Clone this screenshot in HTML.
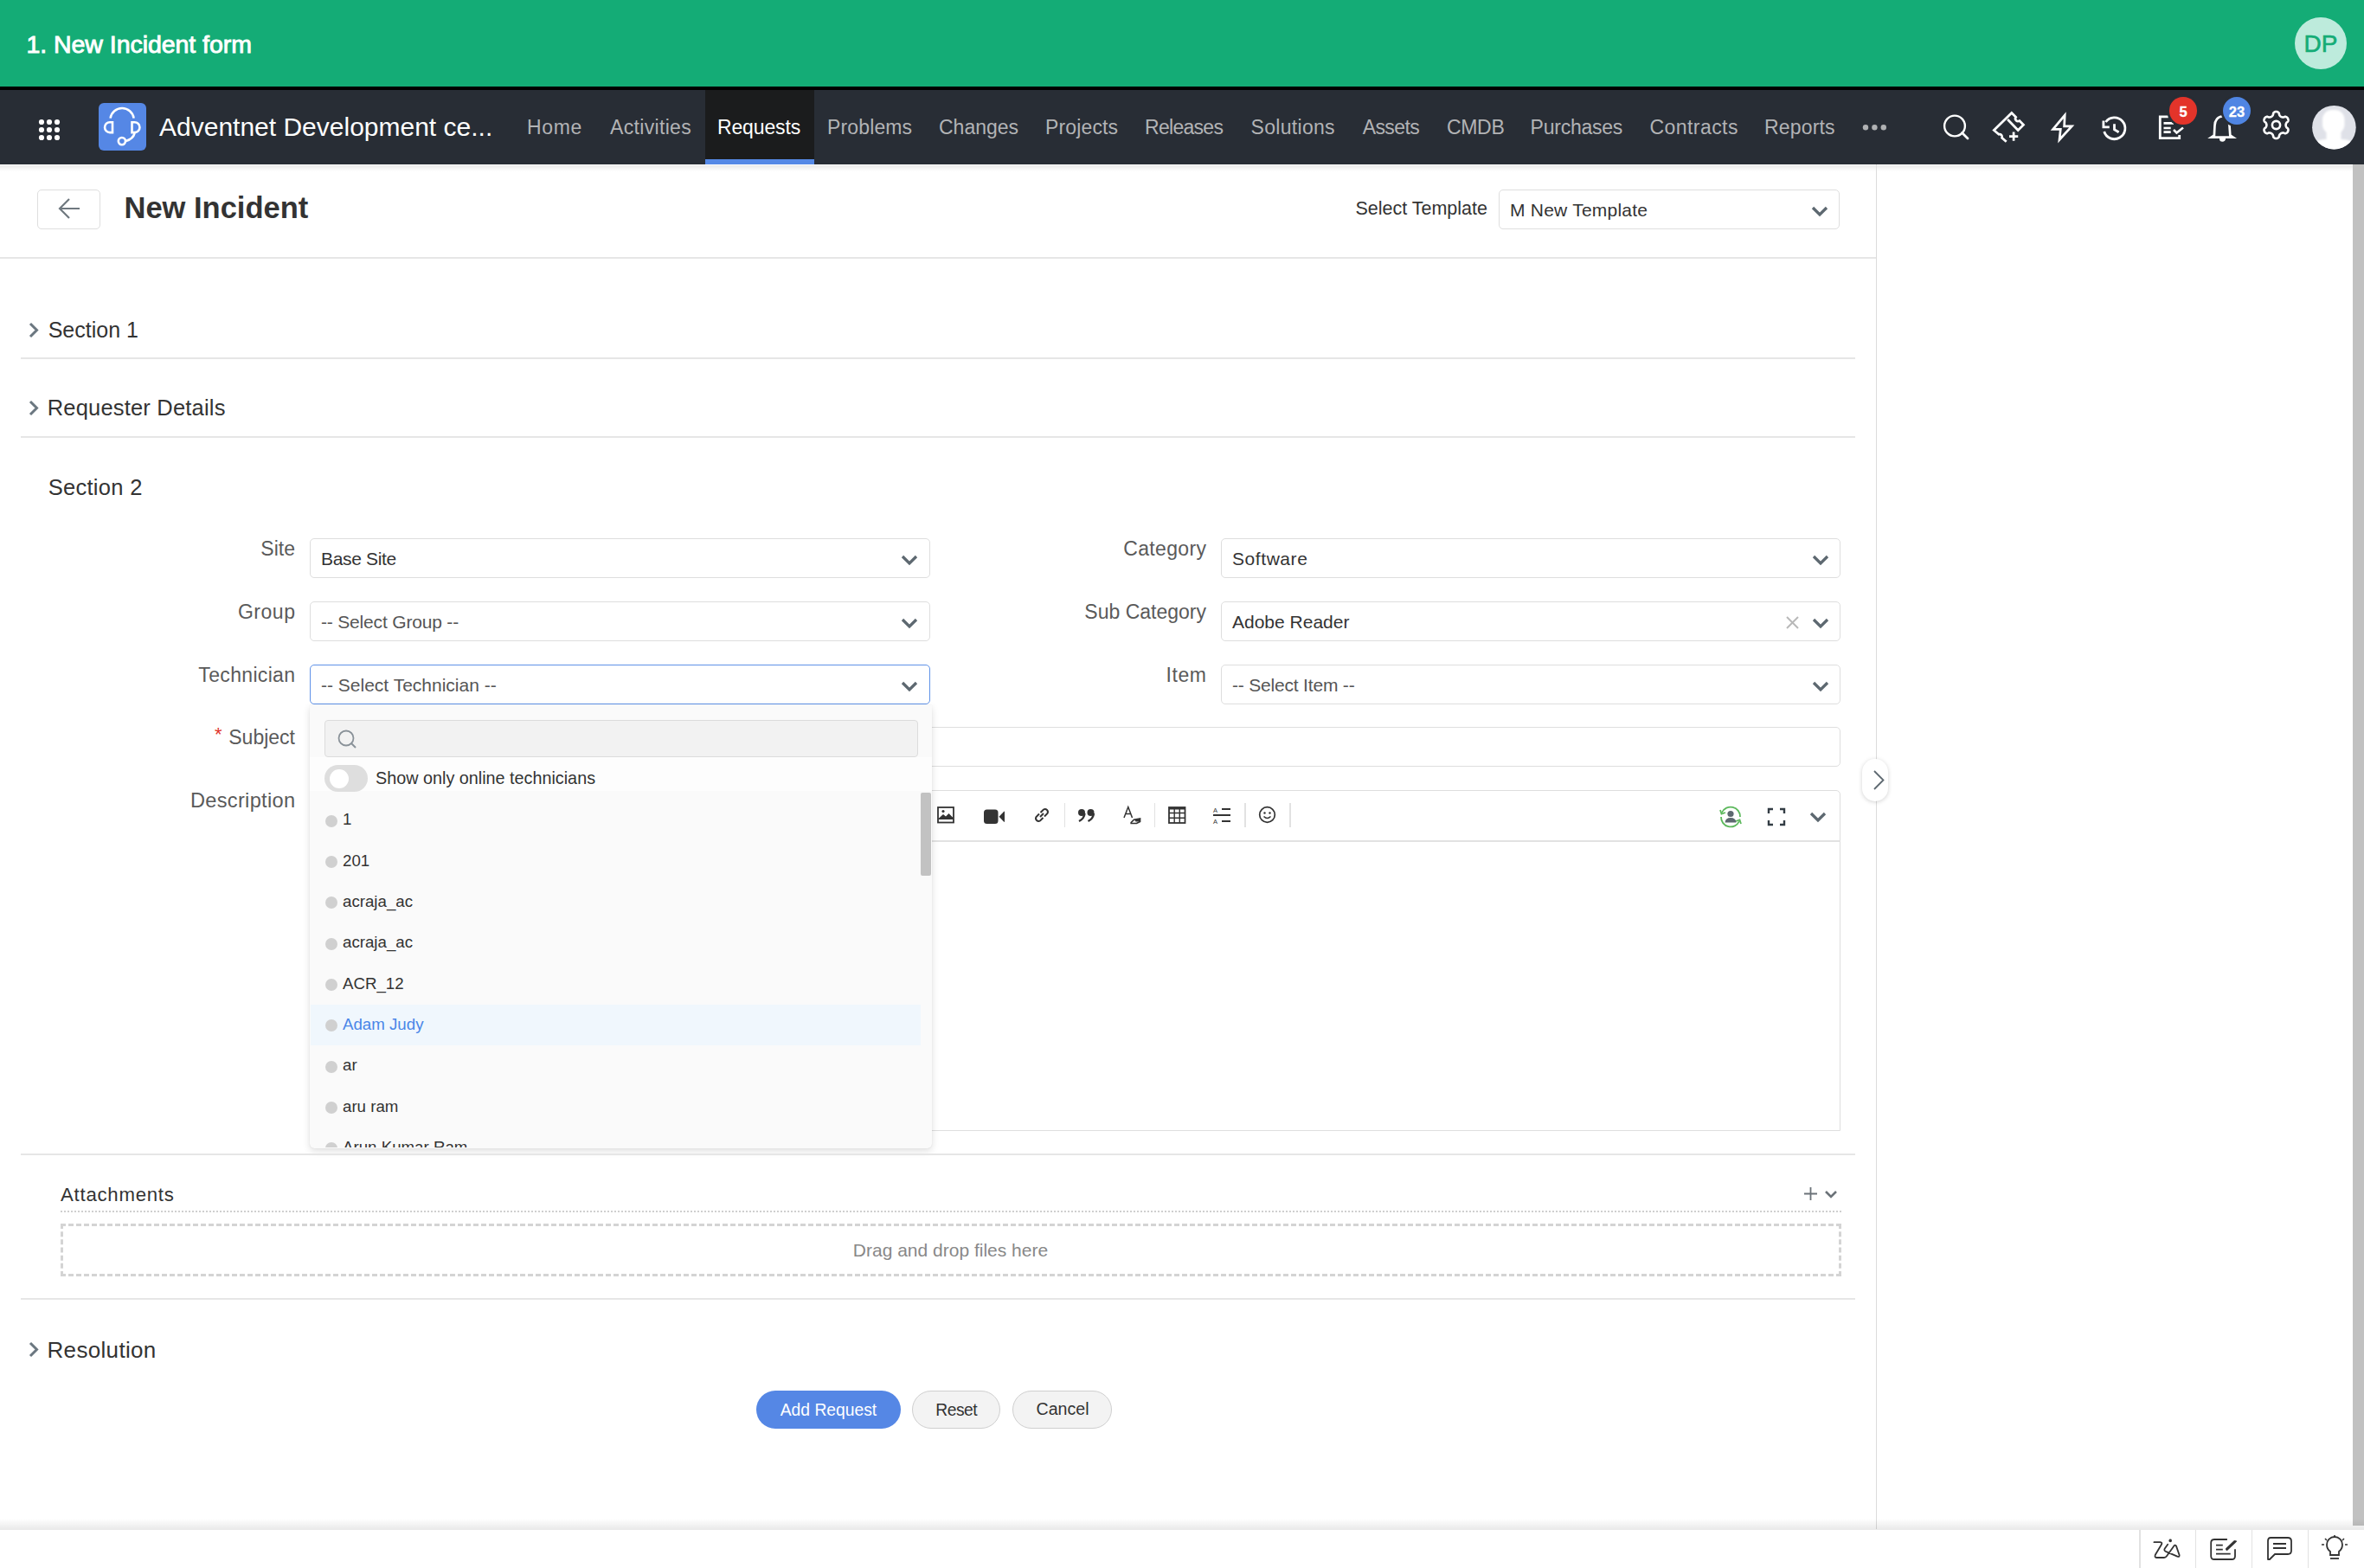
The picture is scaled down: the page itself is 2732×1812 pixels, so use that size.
<!DOCTYPE html>
<html><head><meta charset="utf-8"><title>New Incident</title>
<style>
html,body{margin:0;padding:0;}
body{width:2732px;height:1812px;position:relative;overflow:hidden;background:#fff;font-family:"Liberation Sans", sans-serif;}
svg{overflow:visible}
</style></head><body>
<div style="position:absolute;left:0px;top:0px;width:2732px;height:100px;background:#14ac76"></div>
<div style="position:absolute;left:30.5px;top:37.47px;font-size:28.5px;line-height:28.5px;color:#fff;font-weight:400;white-space:nowrap;letter-spacing:-0.05px;-webkit-text-stroke:0.9px #fff">1. New Incident form</div>
<div style="position:absolute;left:2652px;top:20px;width:60px;height:60px;background:#bdebdc;border-radius:50%"></div>
<div style="position:absolute;left:2182.00px;width:1000px;text-align:center;top:37.10px;font-size:28px;line-height:28px;color:#14ac76;font-weight:400;white-space:nowrap;-webkit-text-stroke:0.6px #14ac76">DP</div>
<div style="position:absolute;left:0px;top:100px;width:2732px;height:4px;background:#000"></div>
<div style="position:absolute;left:0px;top:104px;width:2732px;height:86px;background:#282d35"></div>
<svg style="position:absolute;left:45px;top:138px;" width="24" height="24" viewBox="0 0 24 24"><circle cx="3" cy="3" r="3.1" fill="#fff"/><circle cx="3" cy="12" r="3.1" fill="#fff"/><circle cx="3" cy="21" r="3.1" fill="#fff"/><circle cx="12" cy="3" r="3.1" fill="#fff"/><circle cx="12" cy="12" r="3.1" fill="#fff"/><circle cx="12" cy="21" r="3.1" fill="#fff"/><circle cx="21" cy="3" r="3.1" fill="#fff"/><circle cx="21" cy="12" r="3.1" fill="#fff"/><circle cx="21" cy="21" r="3.1" fill="#fff"/></svg>
<div style="position:absolute;left:114px;top:119px;width:55px;height:55px;background:#5587e5;border-radius:6px"></div>
<svg style="position:absolute;left:114px;top:119px;" width="55" height="55" viewBox="0 0 55 55"><path d="M13.6 17.6 A13.66 13.66 0 0 1 40.6 17.6" fill="none" stroke="#fff" stroke-width="2.6"/><path d="M16 22.2 L16 34.1 L13 34.1 A5.95 5.95 0 0 1 13 22.2 Z" fill="none" stroke="#fff" stroke-width="2.6"/><path d="M38.5 22.2 L38.5 34.1 L41.5 34.1 A5.95 5.95 0 0 0 41.5 22.2 Z" fill="none" stroke="#fff" stroke-width="2.6"/><path d="M41.6 34.8 Q39.8 41.5 31.5 43.9" fill="none" stroke="#fff" stroke-width="2.6"/><circle cx="26.9" cy="44.1" r="4.1" fill="none" stroke="#fff" stroke-width="2.6"/></svg>
<div style="position:absolute;left:184px;top:131.60px;font-size:30px;line-height:30px;color:#fff;font-weight:400;white-space:nowrap;">Adventnet Development ce...</div>
<div style="position:absolute;left:815px;top:104px;width:126px;height:86px;background:#1b1c1d"></div>
<div style="position:absolute;left:815px;top:184px;width:126px;height:6px;background:#5589e6"></div>
<div style="position:absolute;left:609px;top:136.23px;font-size:23px;line-height:23px;color:#b2b3b5;font-weight:400;white-space:nowrap;letter-spacing:0.67px;">Home</div>
<div style="position:absolute;left:705px;top:136.23px;font-size:23px;line-height:23px;color:#b2b3b5;font-weight:400;white-space:nowrap;letter-spacing:0.33px;">Activities</div>
<div style="position:absolute;left:829px;top:136.23px;font-size:23px;line-height:23px;color:#fff;font-weight:400;white-space:nowrap;letter-spacing:-0.14px;">Requests</div>
<div style="position:absolute;left:956px;top:136.23px;font-size:23px;line-height:23px;color:#b2b3b5;font-weight:400;white-space:nowrap;letter-spacing:0.14px;">Problems</div>
<div style="position:absolute;left:1085px;top:136.23px;font-size:23px;line-height:23px;color:#b2b3b5;font-weight:400;white-space:nowrap;">Changes</div>
<div style="position:absolute;left:1208px;top:136.23px;font-size:23px;line-height:23px;color:#b2b3b5;font-weight:400;white-space:nowrap;letter-spacing:0.14px;">Projects</div>
<div style="position:absolute;left:1323px;top:136.23px;font-size:23px;line-height:23px;color:#b2b3b5;font-weight:400;white-space:nowrap;letter-spacing:-0.71px;">Releases</div>
<div style="position:absolute;left:1445.5px;top:136.23px;font-size:23px;line-height:23px;color:#b2b3b5;font-weight:400;white-space:nowrap;letter-spacing:0.31px;">Solutions</div>
<div style="position:absolute;left:1574.7px;top:136.23px;font-size:23px;line-height:23px;color:#b2b3b5;font-weight:400;white-space:nowrap;letter-spacing:-0.6px;">Assets</div>
<div style="position:absolute;left:1672px;top:136.23px;font-size:23px;line-height:23px;color:#b2b3b5;font-weight:400;white-space:nowrap;letter-spacing:-0.33px;">CMDB</div>
<div style="position:absolute;left:1768.6px;top:136.23px;font-size:23px;line-height:23px;color:#b2b3b5;font-weight:400;white-space:nowrap;letter-spacing:-0.25px;">Purchases</div>
<div style="position:absolute;left:1906.6px;top:136.23px;font-size:23px;line-height:23px;color:#b2b3b5;font-weight:400;white-space:nowrap;letter-spacing:0.42px;">Contracts</div>
<div style="position:absolute;left:2039px;top:136.23px;font-size:23px;line-height:23px;color:#b2b3b5;font-weight:400;white-space:nowrap;letter-spacing:0.17px;">Reports</div>
<svg style="position:absolute;left:2152px;top:144px;" width="29" height="7" viewBox="0 0 29 7"><circle cx="4" cy="3.2" r="3.2" fill="#b0b1b3"/><circle cx="14.4" cy="3.2" r="3.2" fill="#b0b1b3"/><circle cx="24.8" cy="3.2" r="3.2" fill="#b0b1b3"/></svg>
<svg style="position:absolute;left:2240px;top:126px;" width="40" height="40" viewBox="0 0 40 40"><circle cx="19" cy="19.5" r="11.9" fill="none" stroke="#fff" stroke-width="2.4"/><path d="M27.5 27.5 L34 34" stroke="#fff" stroke-width="2.8" stroke-linecap="round"/></svg>
<svg style="position:absolute;left:2295px;top:120px;" width="50" height="50" viewBox="0 0 50 50"><path d="M23.7 43.7 L18.6 39.3 A3 3 0 0 0 15 35.3 L9.3 30.5 L29.8 10.5 L34.7 15.3 A3 3 0 0 0 38.9 19.5 L43.5 24.2 L37.2 30.5 L25.1 18" fill="none" stroke="#fff" stroke-width="2.7" stroke-linejoin="miter"/><path d="M32.1 32.6 L32.1 42.8 M27 37.7 L37.2 37.7" stroke="#fff" stroke-width="2.7"/></svg>
<svg style="position:absolute;left:2360px;top:120px;" width="45" height="50" viewBox="0 0 45 50"><path d="M26.2 13.2 L12.6 29.3 L21.3 29.3 L20 41.5 L34.3 25.9 L25.6 25.9 Z" fill="none" stroke="#fff" stroke-width="2.7" stroke-linejoin="miter"/></svg>
<svg style="position:absolute;left:2420px;top:116.5px;" width="50" height="50" viewBox="0 0 50 50"><path d="M11.7 35 A12.4 12.4 0 1 0 13.5 24" fill="none" stroke="#fff" stroke-width="2.8"/><path d="M10.9 22.5 L10.9 29.8 L17.8 29.8" fill="none" stroke="#fff" stroke-width="2.8"/><path d="M23.5 26.3 L23.5 32.6 L28.6 35.7" fill="none" stroke="#fff" stroke-width="2.8"/></svg>
<svg style="position:absolute;left:2420px;top:115px;" width="110" height="50" viewBox="0 0 110 50"><path d="M85.8 19.8 L76.3 19.8 L76.3 44.6 L98.7 44.6 L98.7 41" fill="none" stroke="#fff" stroke-width="2.8"/><path d="M80.5 27.4 L92 27.4 M80.5 33 L88.7 33 M80.5 37.6 L88.7 37.6" stroke="#fff" stroke-width="2.6"/><path d="M92 35 L95.5 38.5 L103 32.5" fill="none" stroke="#fff" stroke-width="2.6"/></svg>
<svg style="position:absolute;left:2545px;top:110px;" width="45" height="56" viewBox="0 0 45 56"><path d="M13.9 46.5 L14.5 35 A8.5 10.5 0 0 1 31.5 35 L32.3 46.5 L35.5 48.6 L10.7 48.6 Z" fill="none" stroke="#fff" stroke-width="2.7" stroke-linejoin="miter"/><path d="M20.7 50.5 A2.8 2.6 0 0 0 26.3 50.5 Z" fill="#fff" stroke="#fff" stroke-width="1.4"/></svg>
<svg style="position:absolute;left:2612.7px;top:127.1px;" width="35" height="35" viewBox="0 0 35 35"><path d="M28.60 17.50 L28.61 17.79 L28.64 18.08 L28.70 18.38 L28.78 18.69 L28.88 19.00 L29.01 19.32 L29.18 19.66 L29.38 20.03 L29.66 20.42 L30.35 20.94 L31.01 21.50 L31.25 21.97 L31.38 22.42 L31.45 22.85 L31.47 23.29 L31.44 23.71 L31.37 24.11 L31.26 24.51 L31.11 24.89 L30.92 25.25 L30.70 25.59 L30.45 25.91 L30.16 26.20 L29.84 26.47 L29.49 26.70 L29.11 26.90 L28.70 27.06 L28.24 27.17 L27.72 27.20 L26.90 26.90 L26.11 26.57 L25.63 26.53 L25.21 26.53 L24.84 26.56 L24.49 26.61 L24.17 26.68 L23.86 26.76 L23.58 26.86 L23.31 26.98 L23.05 27.11 L22.80 27.27 L22.57 27.44 L22.34 27.64 L22.11 27.86 L21.89 28.11 L21.68 28.38 L21.46 28.69 L21.25 29.05 L21.05 29.49 L20.94 30.35 L20.79 31.20 L20.50 31.64 L20.18 31.98 L19.84 32.26 L19.47 32.49 L19.09 32.67 L18.71 32.82 L18.31 32.92 L17.91 32.98 L17.50 33.00 L17.09 32.98 L16.69 32.92 L16.29 32.82 L15.91 32.67 L15.53 32.49 L15.16 32.26 L14.82 31.98 L14.50 31.64 L14.21 31.20 L14.06 30.35 L13.95 29.49 L13.75 29.05 L13.54 28.69 L13.32 28.38 L13.11 28.11 L12.89 27.86 L12.66 27.64 L12.43 27.44 L12.20 27.27 L11.95 27.11 L11.69 26.98 L11.42 26.86 L11.14 26.76 L10.83 26.68 L10.51 26.61 L10.16 26.56 L9.79 26.53 L9.37 26.53 L8.89 26.57 L8.10 26.90 L7.28 27.20 L6.76 27.17 L6.30 27.06 L5.89 26.90 L5.51 26.70 L5.16 26.47 L4.84 26.20 L4.55 25.91 L4.30 25.59 L4.08 25.25 L3.89 24.89 L3.74 24.51 L3.63 24.11 L3.56 23.71 L3.53 23.29 L3.55 22.85 L3.62 22.42 L3.75 21.97 L3.99 21.50 L4.65 20.94 L5.34 20.42 L5.62 20.03 L5.82 19.66 L5.99 19.32 L6.12 19.00 L6.22 18.69 L6.30 18.38 L6.36 18.08 L6.39 17.79 L6.40 17.50 L6.39 17.21 L6.36 16.92 L6.30 16.62 L6.22 16.31 L6.12 16.00 L5.99 15.68 L5.82 15.34 L5.62 14.97 L5.34 14.58 L4.65 14.06 L3.99 13.50 L3.75 13.03 L3.62 12.58 L3.55 12.15 L3.53 11.71 L3.56 11.29 L3.63 10.89 L3.74 10.49 L3.89 10.11 L4.08 9.75 L4.30 9.41 L4.55 9.09 L4.84 8.80 L5.16 8.53 L5.51 8.30 L5.89 8.10 L6.30 7.94 L6.76 7.83 L7.28 7.80 L8.10 8.10 L8.89 8.43 L9.37 8.47 L9.79 8.47 L10.16 8.44 L10.51 8.39 L10.83 8.32 L11.14 8.24 L11.42 8.14 L11.69 8.02 L11.95 7.89 L12.20 7.73 L12.43 7.56 L12.66 7.36 L12.89 7.14 L13.11 6.89 L13.32 6.62 L13.54 6.31 L13.75 5.95 L13.95 5.51 L14.06 4.65 L14.21 3.80 L14.50 3.36 L14.82 3.02 L15.16 2.74 L15.53 2.51 L15.91 2.33 L16.29 2.18 L16.69 2.08 L17.09 2.02 L17.50 2.00 L17.91 2.02 L18.31 2.08 L18.71 2.18 L19.09 2.33 L19.47 2.51 L19.84 2.74 L20.18 3.02 L20.50 3.36 L20.79 3.80 L20.94 4.65 L21.05 5.51 L21.25 5.95 L21.46 6.31 L21.68 6.62 L21.89 6.89 L22.11 7.14 L22.34 7.36 L22.57 7.56 L22.80 7.73 L23.05 7.89 L23.31 8.02 L23.58 8.14 L23.86 8.24 L24.17 8.32 L24.49 8.39 L24.84 8.44 L25.21 8.47 L25.63 8.47 L26.11 8.43 L26.90 8.10 L27.72 7.80 L28.24 7.83 L28.70 7.94 L29.11 8.10 L29.49 8.30 L29.84 8.53 L30.16 8.80 L30.45 9.09 L30.70 9.41 L30.92 9.75 L31.11 10.11 L31.26 10.49 L31.37 10.89 L31.44 11.29 L31.47 11.71 L31.45 12.15 L31.38 12.58 L31.25 13.03 L31.01 13.50 L30.35 14.06 L29.66 14.58 L29.38 14.97 L29.18 15.34 L29.01 15.68 L28.88 16.00 L28.78 16.31 L28.70 16.62 L28.64 16.92 L28.61 17.21 Z" fill="none" stroke="#fff" stroke-width="2.6" stroke-linejoin="round"/><circle cx="17.5" cy="17.5" r="4.6" fill="none" stroke="#fff" stroke-width="2.6"/></svg>
<div style="position:absolute;left:2507.3px;top:112.3px;width:31.4px;height:31.4px;border-radius:50%;background:#e3342a;box-shadow:0 0 0 2.6px #282d35;color:#fff;font-size:16.5px;font-weight:700;text-align:center;line-height:34px;-webkit-text-stroke:0.3px #fff">5</div>
<div style="position:absolute;left:2568.9px;top:112.3px;width:32px;height:32px;border-radius:50%;background:#4f85e3;box-shadow:0 0 0 2.6px #282d35;color:#fff;font-size:16.5px;font-weight:700;text-align:center;line-height:34px;-webkit-text-stroke:0.3px #fff">23</div>
<svg style="position:absolute;left:2672px;top:122px;" width="51" height="51" viewBox="0 0 51 51"><defs><clipPath id="av"><circle cx="25.4" cy="25.2" r="25.3"/></clipPath><filter id="bl"><feGaussianBlur stdDeviation="0.9"/></filter></defs><circle cx="25.4" cy="25.2" r="25.3" fill="#dfe1e8"/><g clip-path="url(#av)" filter="url(#bl)"><rect x="12" y="5" width="25.5" height="28" rx="11" fill="#fff"/><rect x="16.5" y="28" width="17" height="12" fill="#fff"/><path d="M-2 60 L-2 49 Q2 40 14 39 L36 39 Q48 40 53 49 L53 60 Z" fill="#fff"/></g></svg>
<div style="position:absolute;left:0px;top:191px;width:2732px;height:7px;background:linear-gradient(rgba(0,0,0,0.085),rgba(0,0,0,0))"></div>
<div style="position:absolute;left:2168px;top:190px;width:1px;height:1577px;background:#dcdcdc"></div>
<div style="position:absolute;left:2719px;top:190px;width:13px;height:1573px;background:#c1c1c1"></div>
<div style="position:absolute;left:43px;top:219px;width:73px;height:46px;border:1.5px solid #dedede;border-radius:5px;box-sizing:border-box"></div>
<svg style="position:absolute;left:66px;top:228px;" width="28" height="28" viewBox="0 0 28 28"><path d="M26 13 L3 13 M14 2 L3 13 L14 24" fill="none" stroke="#6f787f" stroke-width="2.2"/></svg>
<div style="position:absolute;left:143.5px;top:222.80px;font-size:34.5px;line-height:34.5px;color:#333;font-weight:700;white-space:nowrap;">New Incident</div>
<div style="position:absolute;right:1013.00px;text-align:right;top:230.60px;font-size:21.5px;line-height:21.5px;color:#333;font-weight:400;white-space:nowrap;">Select Template</div>
<div style="position:absolute;left:1732px;top:219px;width:394px;height:46px;border:1.5px solid #dedede;border-radius:5px;box-sizing:border-box;background:#fff"></div>
<div style="position:absolute;left:1745px;top:232.22px;font-size:21px;line-height:21px;color:#333;font-weight:400;white-space:nowrap;letter-spacing:0.23px;">M New Template</div>
<svg style="position:absolute;left:2092.5px;top:237.5px;" width="20" height="13" viewBox="0 0 20 13"><path d="M2 2 L10.0 10 L18 2" fill="none" stroke="#5d6870" stroke-width="3.3"/></svg>
<div style="position:absolute;left:0px;top:297px;width:2168px;height:2px;background:#e6e6e6"></div>
<svg style="position:absolute;left:32px;top:371px;" width="15" height="21" viewBox="0 0 15 21"><path d="M3 3 L10.5 10.5 L3 18" fill="none" stroke="#6b7780" stroke-width="3"/></svg>
<div style="position:absolute;left:55.7px;top:368.84px;font-size:25px;line-height:25px;color:#333;font-weight:400;white-space:nowrap;">Section 1</div>
<div style="position:absolute;left:24px;top:413px;width:2120px;height:2px;background:#e6e6e6"></div>
<svg style="position:absolute;left:32px;top:461px;" width="15" height="21" viewBox="0 0 15 21"><path d="M3 3 L10.5 10.5 L3 18" fill="none" stroke="#6b7780" stroke-width="3"/></svg>
<div style="position:absolute;left:54.7px;top:459.41px;font-size:25.5px;line-height:25.5px;color:#333;font-weight:400;white-space:nowrap;letter-spacing:0.19px;">Requester Details</div>
<div style="position:absolute;left:24px;top:504px;width:2120px;height:2px;background:#e6e6e6"></div>
<div style="position:absolute;left:55.7px;top:551.41px;font-size:25.5px;line-height:25.5px;color:#333;font-weight:400;white-space:nowrap;letter-spacing:0.29px;">Section 2</div>
<div style="position:absolute;left:358px;top:622px;width:717px;height:46px;border:1.5px solid #dedede;border-radius:5px;box-sizing:border-box;background:#fff"></div>
<div style="position:absolute;right:2391.00px;text-align:right;top:623.03px;font-size:23px;line-height:23px;color:#5a5a5a;font-weight:400;white-space:nowrap;">Site</div>
<div style="position:absolute;left:371px;top:634.52px;font-size:21px;line-height:21px;color:#333;font-weight:400;white-space:nowrap;letter-spacing:-0.34px;">Base Site</div>
<svg style="position:absolute;left:1040.5px;top:640.5px;" width="20" height="13" viewBox="0 0 20 13"><path d="M2 2 L10.0 10 L18 2" fill="none" stroke="#5d6870" stroke-width="3.3"/></svg>
<div style="position:absolute;left:1411px;top:622px;width:716px;height:46px;border:1.5px solid #dedede;border-radius:5px;box-sizing:border-box;background:#fff"></div>
<div style="position:absolute;right:1337.64px;text-align:right;top:623.03px;font-size:23px;line-height:23px;color:#5a5a5a;font-weight:400;white-space:nowrap;letter-spacing:0.36px;">Category</div>
<div style="position:absolute;left:1424px;top:634.52px;font-size:21px;line-height:21px;color:#333;font-weight:400;white-space:nowrap;letter-spacing:0.57px;">Software</div>
<svg style="position:absolute;left:2093.5px;top:640.5px;" width="20" height="13" viewBox="0 0 20 13"><path d="M2 2 L10.0 10 L18 2" fill="none" stroke="#5d6870" stroke-width="3.3"/></svg>
<div style="position:absolute;left:358px;top:695px;width:717px;height:46px;border:1.5px solid #dedede;border-radius:5px;box-sizing:border-box;background:#fff"></div>
<div style="position:absolute;right:2390.45px;text-align:right;top:696.03px;font-size:23px;line-height:23px;color:#5a5a5a;font-weight:400;white-space:nowrap;letter-spacing:0.55px;">Group</div>
<div style="position:absolute;left:371px;top:707.52px;font-size:21px;line-height:21px;color:#555;font-weight:400;white-space:nowrap;letter-spacing:-0.18px;">-- Select Group --</div>
<svg style="position:absolute;left:1040.5px;top:713.5px;" width="20" height="13" viewBox="0 0 20 13"><path d="M2 2 L10.0 10 L18 2" fill="none" stroke="#5d6870" stroke-width="3.3"/></svg>
<div style="position:absolute;left:1411px;top:695px;width:716px;height:46px;border:1.5px solid #dedede;border-radius:5px;box-sizing:border-box;background:#fff"></div>
<div style="position:absolute;right:1338.00px;text-align:right;top:696.03px;font-size:23px;line-height:23px;color:#5a5a5a;font-weight:400;white-space:nowrap;">Sub Category</div>
<div style="position:absolute;left:1424px;top:707.52px;font-size:21px;line-height:21px;color:#333;font-weight:400;white-space:nowrap;">Adobe Reader</div>
<svg style="position:absolute;left:2093.5px;top:713.5px;" width="20" height="13" viewBox="0 0 20 13"><path d="M2 2 L10.0 10 L18 2" fill="none" stroke="#5d6870" stroke-width="3.3"/></svg>
<div style="position:absolute;left:358px;top:768px;width:717px;height:46px;border:1.7px solid #5f92e8;border-radius:5px;box-sizing:border-box;background:#fff"></div>
<div style="position:absolute;right:2390.67px;text-align:right;top:769.03px;font-size:23px;line-height:23px;color:#5a5a5a;font-weight:400;white-space:nowrap;letter-spacing:0.33px;">Technician</div>
<div style="position:absolute;left:371px;top:780.52px;font-size:21px;line-height:21px;color:#555;font-weight:400;white-space:nowrap;">-- Select Technician --</div>
<svg style="position:absolute;left:1040.5px;top:786.5px;" width="20" height="13" viewBox="0 0 20 13"><path d="M2 2 L10.0 10 L18 2" fill="none" stroke="#5d6870" stroke-width="3.3"/></svg>
<div style="position:absolute;left:1411px;top:768px;width:716px;height:46px;border:1.5px solid #dedede;border-radius:5px;box-sizing:border-box;background:#fff"></div>
<div style="position:absolute;right:1337.40px;text-align:right;top:769.03px;font-size:23px;line-height:23px;color:#5a5a5a;font-weight:400;white-space:nowrap;letter-spacing:0.6px;">Item</div>
<div style="position:absolute;left:1424px;top:780.52px;font-size:21px;line-height:21px;color:#555;font-weight:400;white-space:nowrap;letter-spacing:-0.19px;">-- Select Item --</div>
<svg style="position:absolute;left:2093.5px;top:786.5px;" width="20" height="13" viewBox="0 0 20 13"><path d="M2 2 L10.0 10 L18 2" fill="none" stroke="#5d6870" stroke-width="3.3"/></svg>
<svg style="position:absolute;left:2062px;top:710px;" width="19" height="19" viewBox="0 0 19 19"><path d="M3 3 L16 16 M16 3 L3 16" stroke="#b9b9b9" stroke-width="2"/></svg>
<div style="position:absolute;left:248px;top:838px;font-size:22px;line-height:22px;color:#e0332b;font-family:'Liberation Sans', sans-serif">*</div>
<div style="position:absolute;right:2391.00px;text-align:right;top:841.03px;font-size:23px;line-height:23px;color:#5a5a5a;font-weight:400;white-space:nowrap;">Subject</div>
<div style="position:absolute;left:358px;top:840px;width:1769px;height:46px;border:1.5px solid #dedede;border-radius:5px;box-sizing:border-box;background:#fff"></div>
<div style="position:absolute;right:2390.70px;text-align:right;top:913.52px;font-size:23.6px;line-height:23.6px;color:#5a5a5a;font-weight:400;white-space:nowrap;letter-spacing:0.3px;">Description</div>
<div style="position:absolute;left:358px;top:913px;width:1769px;height:394px;border:1.5px solid #dedede;border-radius:5px 5px 0 0;box-sizing:border-box;background:#fff"></div>
<div style="position:absolute;left:358px;top:971px;width:1769px;height:1.5px;background:#e2e2e2"></div>
<svg style="position:absolute;left:1083px;top:932px;" width="21" height="20" viewBox="0 0 21 20"><rect x="1" y="1" width="18" height="17.5" fill="none" stroke="#333" stroke-width="1.8"/><circle cx="7" cy="5.5" r="1.6" fill="#333"/><path d="M1.5 14 L7 9 L10 11.5 L13.5 8 L18.5 13 L18.5 15 L1.5 15 Z" fill="#333"/></svg>
<svg style="position:absolute;left:1135px;top:934px;" width="27" height="19" viewBox="0 0 27 19"><rect x="2" y="1.5" width="16.5" height="16.5" rx="3.5" fill="#333"/><path d="M19.5 9.7 L25.5 3.5 Q26 3.5 26 4.5 L26 15 Q26 16 25.5 16 Z" fill="#333"/></svg>
<svg style="position:absolute;left:1193px;top:931px;" width="22" height="22" viewBox="0 0 22 22"><path d="M9 13 L13 9" stroke="#333" stroke-width="2"/><path d="M8 9.5 L4.5 13 A3.3 3.3 0 0 0 9 17.5 L12.5 14" fill="none" stroke="#333" stroke-width="2"/><path d="M9.5 8 L13 4.5 A3.3 3.3 0 0 1 17.5 9 L14 12.5" fill="none" stroke="#333" stroke-width="2"/></svg>
<div style="position:absolute;left:1229.75px;top:928px;width:1.5px;height:28px;background:#e2e2e2"></div>
<div style="position:absolute;left:1333.75px;top:928px;width:1.5px;height:28px;background:#e2e2e2"></div>
<div style="position:absolute;left:1438.25px;top:928px;width:1.5px;height:28px;background:#e2e2e2"></div>
<div style="position:absolute;left:1490.25px;top:928px;width:1.5px;height:28px;background:#e2e2e2"></div>
<svg style="position:absolute;left:1245px;top:934px;" width="22" height="16" viewBox="0 0 22 16"><circle cx="5" cy="5" r="4" fill="#333"/><path d="M8.5 6 Q8 12 2 15" fill="none" stroke="#333" stroke-width="2.4"/><circle cx="15.5" cy="5" r="4" fill="#333"/><path d="M19 6 Q18.5 12 12.5 15" fill="none" stroke="#333" stroke-width="2.4"/></svg>
<svg style="position:absolute;left:1297px;top:931px;" width="23" height="22" viewBox="0 0 23 22"><path d="M2 14 L6.8 1.5 L11.5 14 M4 9.5 L9.6 9.5" fill="none" stroke="#333" stroke-width="1.5"/><path d="M10.2 19.5 L13.5 16.2 L20.5 15 L20.5 18.5 L16.5 20.5 L10.2 20.5 Z" fill="none" stroke="#333" stroke-width="1.7"/><path d="M14 16.2 L20.5 15 L20.5 18.5 L15.5 18.5 Z" fill="#333"/></svg>
<svg style="position:absolute;left:1350px;top:932px;" width="21" height="20" viewBox="0 0 21 20"><rect x="1" y="1" width="18.5" height="18" fill="none" stroke="#333" stroke-width="1.8"/><rect x="1" y="1" width="18.5" height="2.5" fill="#333"/><path d="M7.2 1 L7.2 19 M13.3 1 L13.3 19 M1 7.5 L19.5 7.5 M1 13.3 L19.5 13.3" stroke="#333" stroke-width="1.4"/></svg>
<svg style="position:absolute;left:1402px;top:931px;" width="21" height="22" viewBox="0 0 21 22"><text x="0" y="8" font-size="7.5" font-family="Liberation Sans" fill="#333">A</text><text x="0" y="20.5" font-size="7.5" font-family="Liberation Sans" fill="#333">A</text><path d="M10 4 L20 4 M0 11 L20 11 M10 18 L20 18" stroke="#333" stroke-width="1.9"/></svg>
<svg style="position:absolute;left:1454px;top:931px;" width="21" height="21" viewBox="0 0 21 21"><circle cx="10.5" cy="10.5" r="8.8" fill="none" stroke="#333" stroke-width="1.7"/><circle cx="7.5" cy="8.5" r="1.2" fill="#333"/><circle cx="13.5" cy="8.5" r="1.2" fill="#333"/><path d="M6.5 12.5 Q10.5 16.5 14.5 12.5" fill="none" stroke="#333" stroke-width="1.5"/></svg>
<svg style="position:absolute;left:1985px;top:929px;" width="30" height="30" viewBox="0 0 30 30"><path d="M26 15 A11 11 0 0 0 5 10" fill="none" stroke="#5cb85c" stroke-width="1.8"/><path d="M4 15 A11 11 0 0 0 25 20" fill="none" stroke="#5cb85c" stroke-width="1.8"/><path d="M3 7 L4.5 11.5 L9 10" fill="none" stroke="#5cb85c" stroke-width="1.8"/><path d="M27 23 L25.5 18.5 L21 20" fill="none" stroke="#5cb85c" stroke-width="1.8"/><circle cx="15" cy="11.5" r="3.6" fill="#5d6870"/><path d="M8.5 21.5 Q9 16 15 16 Q21 16 21.5 21.5 Z" fill="#5d6870"/></svg>
<svg style="position:absolute;left:2042px;top:933px;" width="22" height="22" viewBox="0 0 22 22"><path d="M2 7 L2 2 L7 2 M15 2 L20 2 L20 7 M20 15 L20 20 L15 20 M7 20 L2 20 L2 15" fill="none" stroke="#333c44" stroke-width="2.4"/></svg>
<svg style="position:absolute;left:2091px;top:938px;" width="20" height="13" viewBox="0 0 20 13"><path d="M2 2 L10.0 10 L18 2" fill="none" stroke="#5d6870" stroke-width="3.3"/></svg>
<div style="position:absolute;left:2152px;top:877px;width:30px;height:49px;background:#fff;border-radius:15px;box-shadow:0 1px 5px rgba(0,0,0,0.18)"></div>
<svg style="position:absolute;left:2163px;top:889px;" width="17" height="26" viewBox="0 0 17 26"><path d="M3 2 L13.5 12.5 L3 23" fill="none" stroke="#5d6870" stroke-width="1.8"/></svg>
<div style="position:absolute;left:358px;top:815px;width:719px;height:512px;background:#fafafa;border-radius:0 0 5px 5px;box-shadow:0 3px 9px rgba(0,0,0,0.13), 0 0 1px rgba(0,0,0,0.15);overflow:hidden">
<div style="position:absolute;left:0;top:60px;width:719px;height:39px;background:#fdfdfd"></div>
<div style="position:absolute;left:17px;top:17px;width:686px;height:43px;background:#f2f2f2;border:1.5px solid #dcdcdc;border-radius:4px;box-sizing:border-box"></div>
<svg style="position:absolute;left:32px;top:28px" width="23" height="23" viewBox="0 0 23 23"><circle cx="10" cy="10" r="8.5" fill="none" stroke="#8a9299" stroke-width="1.8"/><path d="M16 16 L21 21" stroke="#8a9299" stroke-width="2"/></svg>
<div style="position:absolute;left:17px;top:69px;width:50px;height:31px;background:#dedede;border-radius:16px"></div>
<div style="position:absolute;left:23px;top:73.5px;width:22px;height:22px;background:#fff;border-radius:50%"></div>
<div style="position:absolute;left:1064px;top:0"></div>
<div style="position:absolute;left:706px;top:101px;width:12px;height:96px;background:#c2c2c2;border-radius:2px"></div>
<div style="position:absolute;left:1px;top:346px;width:705px;height:47px;background:#f0f7fd"></div>
</div>
<div style="position:absolute;left:434px;top:889.74px;font-size:19.8px;line-height:19.8px;color:#333;font-weight:400;white-space:nowrap;">Show only online technicians</div>
<div style="position:absolute;left:375.5px;top:941.5px;width:14px;height:14px;border-radius:50%;background:#d0d0d0"></div>
<div style="position:absolute;left:396px;top:938.17px;font-size:18.7px;line-height:18.7px;color:#333;font-weight:400;white-space:nowrap;">1</div>
<div style="position:absolute;left:375.5px;top:988.85px;width:14px;height:14px;border-radius:50%;background:#d0d0d0"></div>
<div style="position:absolute;left:396px;top:985.52px;font-size:18.7px;line-height:18.7px;color:#333;font-weight:400;white-space:nowrap;">201</div>
<div style="position:absolute;left:375.5px;top:1036.2px;width:14px;height:14px;border-radius:50%;background:#d0d0d0"></div>
<div style="position:absolute;left:396px;top:1032.87px;font-size:18.7px;line-height:18.7px;color:#333;font-weight:400;white-space:nowrap;">acraja_ac</div>
<div style="position:absolute;left:375.5px;top:1083.55px;width:14px;height:14px;border-radius:50%;background:#d0d0d0"></div>
<div style="position:absolute;left:396px;top:1080.22px;font-size:18.7px;line-height:18.7px;color:#333;font-weight:400;white-space:nowrap;">acraja_ac</div>
<div style="position:absolute;left:375.5px;top:1130.9px;width:14px;height:14px;border-radius:50%;background:#d0d0d0"></div>
<div style="position:absolute;left:396px;top:1127.57px;font-size:18.7px;line-height:18.7px;color:#333;font-weight:400;white-space:nowrap;">ACR_12</div>
<div style="position:absolute;left:375.5px;top:1178.25px;width:14px;height:14px;border-radius:50%;background:#d0d0d0"></div>
<div style="position:absolute;left:396px;top:1174.92px;font-size:18.7px;line-height:18.7px;color:#4a86e8;font-weight:400;white-space:nowrap;">Adam Judy</div>
<div style="position:absolute;left:375.5px;top:1225.6px;width:14px;height:14px;border-radius:50%;background:#d0d0d0"></div>
<div style="position:absolute;left:396px;top:1222.27px;font-size:18.7px;line-height:18.7px;color:#333;font-weight:400;white-space:nowrap;">ar</div>
<div style="position:absolute;left:375.5px;top:1272.95px;width:14px;height:14px;border-radius:50%;background:#d0d0d0"></div>
<div style="position:absolute;left:396px;top:1269.62px;font-size:18.7px;line-height:18.7px;color:#333;font-weight:400;white-space:nowrap;">aru ram</div>
<div style="position:absolute;left:359px;top:1308.8px;width:705px;height:17.2px;overflow:hidden">
<div style="position:absolute;left:16.5px;top:11.5px;width:14px;height:14px;border-radius:50%;background:#d0d0d0"></div>
<div style="position:absolute;left:37px;top:8.17px;font-size:18.7px;line-height:18.7px;color:#333;white-space:nowrap">Arun Kumar Ram</div>
</div>
<div style="position:absolute;left:24px;top:1333px;width:2120px;height:2px;background:#e6e6e6"></div>
<div style="position:absolute;left:70px;top:1369.71px;font-size:22.2px;line-height:22.2px;color:#333;font-weight:400;white-space:nowrap;letter-spacing:0.75px">Attachments</div>
<svg style="position:absolute;left:2084px;top:1371px;" width="17" height="17" viewBox="0 0 17 17"><path d="M8.5 1 L8.5 16 M1 8.5 L16 8.5" stroke="#6b7278" stroke-width="1.8"/></svg>
<svg style="position:absolute;left:2108px;top:1375px;" width="16" height="11" viewBox="0 0 16 11"><path d="M2 2 L8.0 8 L14 2" fill="none" stroke="#6b7278" stroke-width="2.6"/></svg>
<div style="position:absolute;left:70px;top:1399px;width:2058px;height:2px;background-image:linear-gradient(to right,#cfcfcf 50%,transparent 50%);background-size:4px 2px"></div>
<div style="position:absolute;left:70px;top:1414px;width:2058px;height:61px;border:3px dashed #d4d4d4;box-sizing:border-box"></div>
<div style="position:absolute;left:598.50px;width:1000px;text-align:center;top:1434.22px;font-size:21px;line-height:21px;color:#888;font-weight:400;white-space:nowrap;">Drag and drop files here</div>
<div style="position:absolute;left:24px;top:1500px;width:2120px;height:2px;background:#e6e6e6"></div>
<svg style="position:absolute;left:32px;top:1549px;" width="15" height="21" viewBox="0 0 15 21"><path d="M3 3 L10.5 10.5 L3 18" fill="none" stroke="#6b7780" stroke-width="3"/></svg>
<div style="position:absolute;left:54.5px;top:1546.99px;font-size:26px;line-height:26px;color:#333;font-weight:400;white-space:nowrap;letter-spacing:0.33px;">Resolution</div>
<div style="position:absolute;left:874px;top:1607px;width:167px;height:44px;border-radius:22px;background:#5587e5"></div>
<div style="position:absolute;left:457.50px;width:1000px;text-align:center;top:1619.66px;font-size:19.3px;line-height:19.3px;color:#fff;font-weight:400;white-space:nowrap;">Add Request</div>
<div style="position:absolute;left:1054px;top:1607px;width:102px;height:44px;border-radius:22px;background:#f3f3f3;border:1.5px solid #cfcfcf;box-sizing:border-box"></div>
<div style="position:absolute;left:605.25px;width:1000px;text-align:center;top:1619.66px;font-size:19.3px;line-height:19.3px;color:#333;font-weight:400;white-space:nowrap;letter-spacing:-0.5px;">Reset</div>
<div style="position:absolute;left:1170px;top:1607px;width:115px;height:44px;border-radius:22px;background:#f3f3f3;border:1.5px solid #cfcfcf;box-sizing:border-box"></div>
<div style="position:absolute;left:728.00px;width:1000px;text-align:center;top:1619.41px;font-size:19.6px;line-height:19.6px;color:#333;font-weight:400;white-space:nowrap;">Cancel</div>
<div style="position:absolute;left:0px;top:1755px;width:2732px;height:13px;background:linear-gradient(rgba(0,0,0,0),rgba(0,0,0,0.09))"></div>
<div style="position:absolute;left:0px;top:1768px;width:2732px;height:44px;background:#fff"></div>
<div style="position:absolute;left:2472px;top:1768px;width:1.5px;height:44px;background:#e2e2e2"></div>
<div style="position:absolute;left:2536.5px;top:1768px;width:1.5px;height:44px;background:#e2e2e2"></div>
<div style="position:absolute;left:2601.5px;top:1768px;width:1.5px;height:44px;background:#e2e2e2"></div>
<div style="position:absolute;left:2666.5px;top:1768px;width:1.5px;height:44px;background:#e2e2e2"></div>
<svg style="position:absolute;left:2480px;top:1770px;" width="45" height="40" viewBox="0 0 45 40"><path d="M9.4 12.2 L16.5 12.2 Q19.2 12.5 18 14.8 L10.8 26.8 Q9.6 30 12.8 30 L21 30 Q22.8 30 24 28.3 L32.6 16.2 Q33.8 14.8 35 16.6 L38.6 27 Q39 29.5 36.3 28.6 L22.8 22.8 Q20.5 21.6 21.8 19.6 L25.2 14.7" fill="none" stroke="#333" stroke-width="1.8" stroke-linecap="round" stroke-linejoin="round"/><circle cx="28.2" cy="10.4" r="1.8" fill="#333"/></svg>
<svg style="position:absolute;left:2480px;top:1770px;" width="110" height="40" viewBox="0 0 110 40"><path d="M93.9 9 L79 9 Q75.2 9 75.2 12.8 L75.2 28.2 Q75.2 32 79 32 L99.2 32 Q103 32 103 28.2 L103 20.3" fill="none" stroke="#333" stroke-width="1.8"/><path d="M81 15.7 L88.8 15.7 M81 20.6 L88.8 20.6 M81 25.6 L97.7 25.6" stroke="#333" stroke-width="1.8"/><path d="M93.6 20.2 L102.6 11.6" stroke="#333" stroke-width="3.2" stroke-linecap="round"/><path d="M103.4 10.6 L104.6 11.8" stroke="#333" stroke-width="1.6"/></svg>
<svg style="position:absolute;left:2618px;top:1774px;" width="32" height="32" viewBox="0 0 32 32"><path d="M6 3 L26 3 Q30 3 30 7 L30 18 Q30 22 26 22 L11 22 L5 28 L3 28 L3 7 Q3 3 6 3 Z" fill="none" stroke="#333" stroke-width="1.8" stroke-linejoin="round"/><path d="M9 10 L24 10 M9 15 L24 15" stroke="#333" stroke-width="1.8"/></svg>
<svg style="position:absolute;left:2682px;top:1772px;" width="32" height="32" viewBox="0 0 32 32"><path d="M16 2 L16 5 M5 6 L7 8 M27 6 L25 8 M1 13 L4 13 M28 13 L31 13" stroke="#333" stroke-width="1.6"/><path d="M11 25 L11 21 Q7 18 7 13 A9 9 0 0 1 25 13 Q25 18 21 21 L21 25 Z" fill="none" stroke="#333" stroke-width="1.8"/><path d="M11 29 L21 29" stroke="#333" stroke-width="1.8"/></svg>
</body></html>
